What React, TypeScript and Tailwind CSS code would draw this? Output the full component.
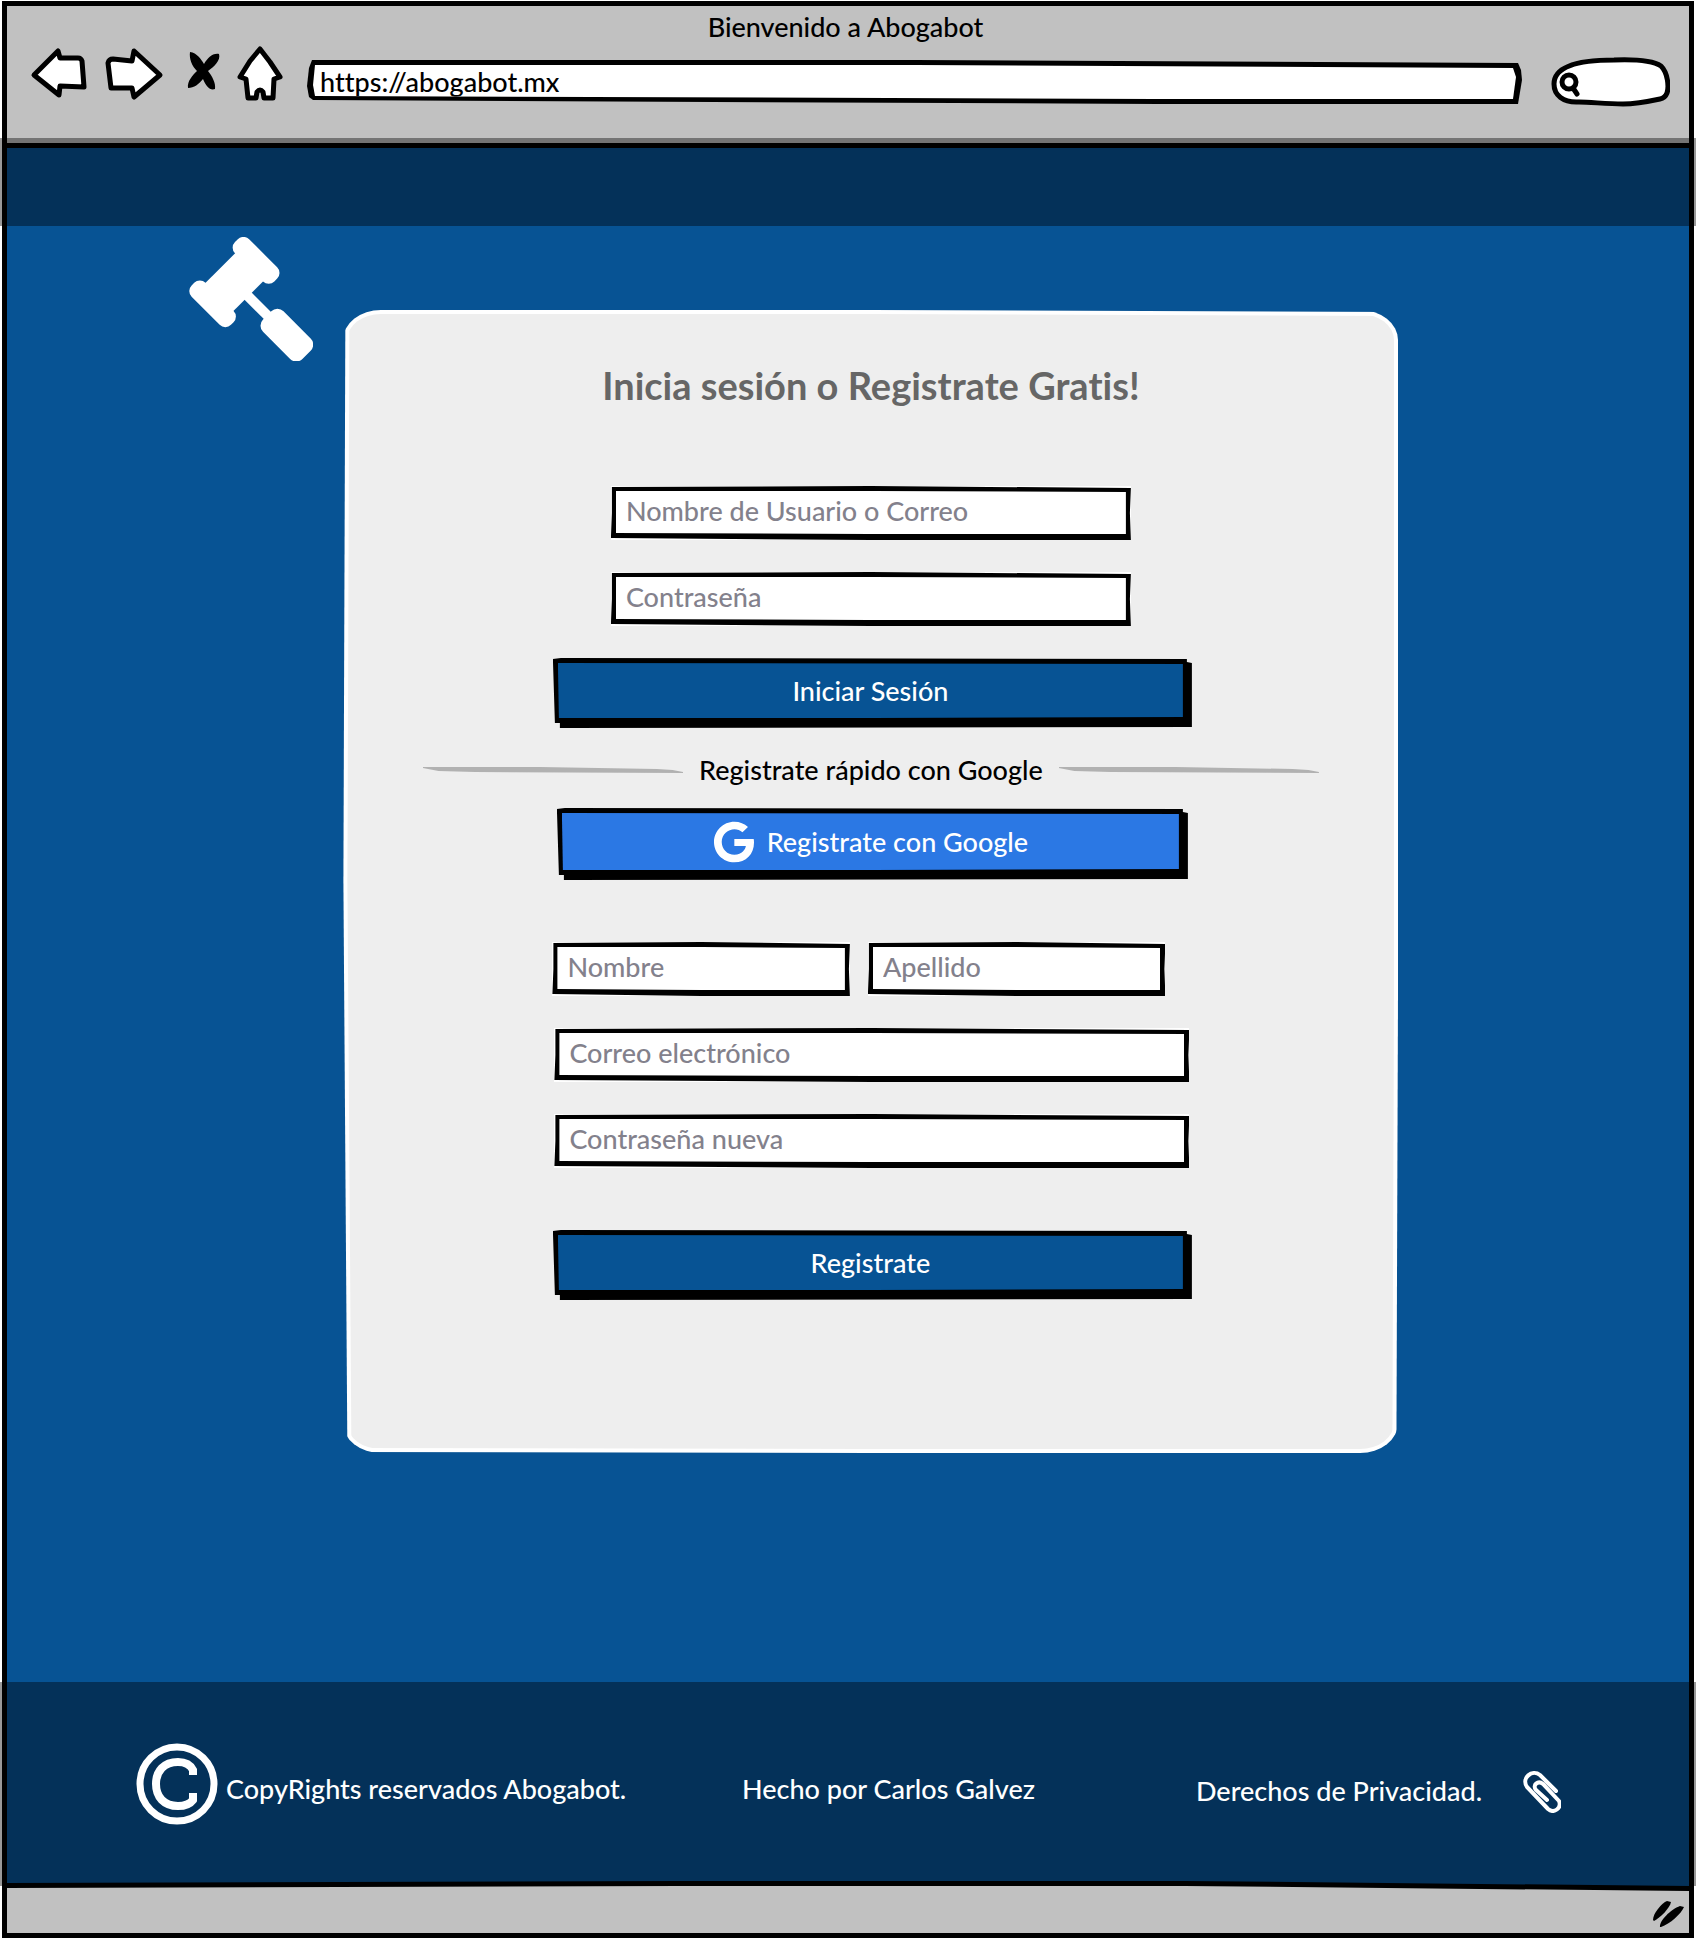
import type { ReactNode } from "react";
import { FaGoogle } from "react-icons/fa";

type FieldProps = {
  label: string;
  type?: string;
};

function Field({ label, type = "text" }: FieldProps) {
  return (
    <label className="block w-full bg-white">
      <span className="block bg-black px-[5px] pt-[5px] pb-[6px] [clip-path:polygon(1px_1px,50%_0,100%_2px,calc(100%_-_1px)_50%,100%_100%,50%_100%,0_calc(100%_-_2px),1px_50%)]">
        <input
          type={type}
          aria-label={label}
          placeholder={label}
          className="block h-[43px] w-full bg-white px-[10px] pb-1 text-[27px] leading-[30px] font-medium text-black outline-none [clip-path:polygon(0_0,50%_0,100%_1px,100%_50%,100%_100%,50%_100%,0_calc(100%_-_1px))] placeholder:text-[#83818c] placeholder:opacity-100"
        />
      </span>
    </label>
  );
}

type SketchButtonProps = {
  tone: "navy" | "google";
  children: ReactNode;
};

function SketchButton({ tone, children }: SketchButtonProps) {
  return (
    <button
      type="button"
      className="block w-full cursor-pointer bg-black pt-[5px] pr-[9px] pb-[10px] pl-[5px] text-[27px] leading-[30px] font-medium text-white [clip-path:polygon(0_1px,8px_0,calc(100%_-_5px)_1px,calc(100%_-_5px)_4px,100%_5px,100%_calc(100%_-_1px),7px_100%,7px_calc(100%_-_5px),2px_calc(100%_-_5px))]"
    >
      <span
        className={
          tone === "navy"
            ? "flex h-[55px] items-center justify-center bg-[#075394] [clip-path:polygon(0_0,100%_1px,100%_calc(100%_-_1px),50%_100%,1px_100%)]"
            : "flex h-[57px] items-center justify-center gap-3 bg-[#2b78e4] [clip-path:polygon(0_0,100%_1px,100%_calc(100%_-_1px),50%_100%,1px_100%)]"
        }
      >
        {children}
      </span>
    </button>
  );
}

function Rule() {
  return (
    <span className="h-[6px] min-w-0 flex-1 bg-[#b1b1b1] [clip-path:polygon(0_0,45%_0,90%_2px,96%_3px,100%_5px,100%_6px,20%_5px,6%_4px,0_1px)]" />
  );
}

function Gavel() {
  return (
    <svg viewBox="57 52 371 372" className="h-[124px] w-[124px]" fill="white" aria-label="Abogabot" role="img">
      <g transform="matrix(.7071 .7071 .7071 -.7071 0 0)">
        <rect x="185" y="66" width="167" height="60" rx="24" />
        <rect x="185" y="-118" width="167" height="59" rx="24" />
        <rect x="209" y="-64" width="119" height="134" />
        <rect x="320" y="-12" width="110" height="30" />
        <rect x="409" y="-41" width="167" height="87" rx="26" />
      </g>
    </svg>
  );
}

function BrowserBar() {
  return (
    <header className="border-b-[5px] border-black bg-[#c1c1c1] pt-[6px] pr-[19px] pb-[36px] pl-6">
      <h1 className="pr-[10px] text-center text-[27px] leading-[30px] font-medium text-black">Bienvenido a Abogabot</h1>
      <div className="mt-1 flex items-start gap-6">
        <nav className="flex gap-5" aria-label="Navegador">
          <button type="button" aria-label="Atrás">
            <svg viewBox="0 0 54 56" className="h-14 w-[54px] overflow-visible" fill="white" stroke="black" strokeWidth="5" strokeLinejoin="round">
              <path d="M3 29 L27 5 L29 12 H47 Q50 12 51 15 L53 41 L29 40 L28 49 Z" />
            </svg>
          </button>
          <button type="button" aria-label="Adelante">
            <svg viewBox="0 0 58 56" className="h-14 w-[58px] overflow-visible" fill="white" stroke="black" strokeWidth="5" strokeLinejoin="round">
              <path d="M3 17 Q4 13 8 13 L27 15 L29 5 L55 29 L29 51 L27 42 L6 42 Z" />
            </svg>
          </button>
          <button type="button" aria-label="Detener">
            <svg viewBox="0 0 34 56" className="h-14 w-[34px] overflow-visible" fill="black">
              <path d="M7 6 C14 7 18 13 21 18 C25 12 29 7 36 8 C38 14 31 21 25 25 C29 30 33 37 32 43 C27 45 23 40 20 33 C16 38 11 42 5 42 C4 35 10 29 14 25 C9 20 6 13 7 6 Z" />
            </svg>
          </button>
          <button type="button" aria-label="Inicio">
            <svg viewBox="0 0 46 56" className="h-14 w-[46px] overflow-visible" fill="white" stroke="black" strokeWidth="5" strokeLinejoin="round">
              <path d="M23 3 L33 16 L43 31 L37 33 L36 52 L27 52 L26 46 Q23 42 20 46 L19 52 L11 52 L9 33 L3 31 L13 15 Z" />
            </svg>
          </button>
        </nav>
        <div className="mt-[11px] flex min-w-0 flex-1 items-center gap-[29px]">
          <div className="min-w-0 flex-1 bg-black py-[5px] pr-[5px] pl-[6px] [clip-path:polygon(5px_0,50%_0,calc(100%_-_4px)_3px,calc(100%_-_1px)_10px,100%_20px,calc(100%_-_4px)_100%,70%_100%,6px_40px,2px_37px,0_26px,2px_8px)]">
            <input
              type="text"
              aria-label="Dirección"
              defaultValue="https://abogabot.mx"
              className="block h-[34px] w-full bg-white pb-0.5 pl-[7px] text-[27px] leading-[30px] font-medium text-black outline-none [clip-path:polygon(2px_0,50%_0,calc(100%_-_4px)_3px,calc(100%_-_1px)_12px,calc(100%_-_4px)_100%,70%_100%,2px_31px,0_20px)]"
            />
          </div>
          <div className="relative h-[50px] w-[119px]">
            <svg viewBox="0 0 119 50" className="absolute inset-0 h-full w-full" fill="none" stroke="black" strokeWidth="5" strokeLinecap="round" strokeLinejoin="round">
              <path fill="white" d="M28 45 C12 46 3 38 3 27 C3 12 20 3 63 3 C90 2 104 5 110 9 C117 16 118 30 116 36 Q114 41 109 42 C95 45 82 47 72 47 C55 47 40 45 28 45 Z" />
              <circle cx="18" cy="25" r="7" />
              <path d="M22 31 L26 37" />
            </svg>
            <input type="search" aria-label="Buscar" className="relative ml-8 h-full w-[76px] bg-transparent text-base outline-none" />
          </div>
        </div>
      </div>
    </header>
  );
}

function AccessForm() {
  return (
    <section className="rounded-[38px/30px] bg-white p-1 [clip-path:polygon(2px_0,50%_0,100%_2px,100%_50%,calc(100%_-_2px)_100%,50%_100%,4px_calc(100%_-_1px),0_50%)]">
      <form className="flex flex-col items-center rounded-[34px/26px] bg-[#eeeeee] px-6 pt-[51px] pb-[149px] [clip-path:polygon(2px_0,50%_0,100%_2px,100%_50%,calc(100%_-_2px)_100%,50%_100%,4px_calc(100%_-_1px),0_50%)]">
        <h2 className="text-center text-[38px] leading-[40px] font-bold text-[#666666]">
          Inicia sesión o Registrate Gratis!
        </h2>
        <div className="mt-[81px] flex w-full max-w-[520px] flex-col gap-8">
          <Field label="Nombre de Usuario o Correo" />
          <Field label="Contraseña" type="password" />
        </div>
        <div className="mt-8 w-full max-w-[642px] pl-[3px]">
          <SketchButton tone="navy">Iniciar Sesión</SketchButton>
        </div>
        <div className="mt-[26px] mb-[22px] flex w-full max-w-[896px] items-center gap-4">
          <Rule />
          <p className="text-[27px] leading-8 font-medium text-black">Registrate rápido con Google</p>
          <Rule />
        </div>
        <div className="w-full max-w-[634px] pl-[3px]">
          <SketchButton tone="google">
            <FaGoogle className="h-[42px] w-[42px]" aria-hidden="true" />
            Registrate con Google
          </SketchButton>
        </div>
        <div className="mt-[62px] flex w-full max-w-[637px] flex-col gap-8">
          <div className="flex gap-[18px] pr-6">
            <Field label="Nombre" />
            <Field label="Apellido" />
          </div>
          <div className="flex flex-col gap-8 pl-[2px]">
            <Field label="Correo electrónico" type="email" />
            <Field label="Contraseña nueva" type="password" />
          </div>
        </div>
        <div className="mt-[62px] w-full max-w-[642px] pl-[3px]">
          <SketchButton tone="navy">Registrate</SketchButton>
        </div>
      </form>
    </section>
  );
}

function Footer() {
  return (
    <footer className="relative -mx-[7px] grid grid-cols-[606fr_454fr_365fr] items-center bg-black/40 pt-[61px] pr-[135px] pb-[61px] pl-[136px] text-[27px] leading-[30px] font-medium text-white">
      <div className="flex items-center gap-2">
        <svg viewBox="0 0 82 82" className="h-[82px] w-[82px] shrink-0" fill="none" stroke="white" aria-hidden="true">
          <circle cx="41" cy="41" r="37" strokeWidth="7" />
          <path strokeWidth="8" d="M57 32 V27 C54 21 48 19 42 19 C28 19 20 28 20 41 C20 54 28 63 42 63 C49 63 54 61 57 57 V50" />
        </svg>
        <p className="pt-[10px]">CopyRights reservados Abogabot.</p>
      </div>
      <p className="pt-[10px]">Hecho por Carlos Galvez</p>
      <div className="flex items-center justify-between pt-4">
        <a href="#privacidad" className="pb-0.5">Derechos de Privacidad.</a>
        <svg viewBox="0 0 38 42" className="h-[42px] w-[38px] shrink-0" fill="none" stroke="white" strokeWidth="4" strokeLinecap="round" aria-hidden="true">
          <path d="M33 20 L17 4 C9 -2 -2 7 4 16 L25 38 C31 43 39 37 36 30 L20 13 C15 9 9 14 13 19 L24 29" />
        </svg>
      </div>
    </footer>
  );
}

function StatusBar() {
  return (
    <div className="relative -mt-[5px] bg-black pt-[5px] [clip-path:polygon(0_2px,40%_0,70%_0,100%_5px,100%_100%,0_100%)]">
      <div className="flex h-[47px] items-center justify-end bg-[#c1c1c1] pt-2 pr-[5px] [clip-path:polygon(0_2px,40%_0,70%_0,100%_5px,100%_100%,0_100%)]">
        <svg viewBox="0 0 31 26" className="h-[26px] w-[31px]" fill="black" aria-hidden="true">
          <path d="M0 19 C0 12 9 2 14 0 L18 1 C17 7 7 17 1 20 Z" />
          <path d="M7 26 C6 20 18 8 27 5 L31 6 C28 13 17 23 8 26 Z" />
        </svg>
      </div>
    </div>
  );
}

export default function App() {
  return (
    <div className="flex min-h-screen flex-col overflow-x-hidden bg-white px-[2px] pt-px pb-[2px] font-['Lato',sans-serif] [font-variant-ligatures:none]">
      <div className="flex flex-1 flex-col border-[5px] border-black bg-[#075394]">
        <BrowserBar />
        <div className="relative -mx-[7px] -mt-[10px] h-[88px] bg-black/40" />
        <main className="grid flex-1 grid-cols-[20%_minmax(0,1055px)_1fr] items-start pb-[229px]">
          <div className="flex justify-end pt-[11px] pr-[30px]">
            <Gavel />
          </div>
          <div className="pt-[84px]">
            <AccessForm />
          </div>
        </main>
        <Footer />
        <StatusBar />
      </div>
    </div>
  );
}
